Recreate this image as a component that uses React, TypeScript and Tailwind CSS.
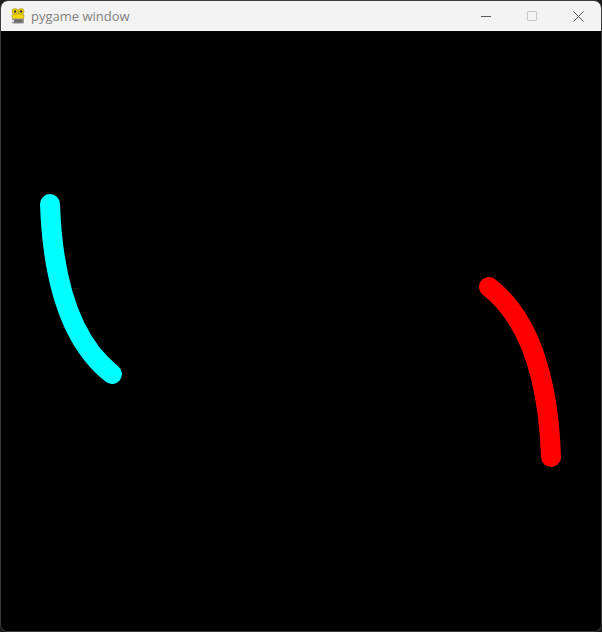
import React from "react";

function PygameIcon() {
  return (
    <svg width="18" height="18" viewBox="0 0 18 18" className="block">
      <ellipse cx="6" cy="4.5" rx="3" ry="3" fill="#f5d800" stroke="#9a8a20" strokeWidth="0.6" />
      <ellipse cx="12" cy="4.5" rx="3" ry="3" fill="#f5d800" stroke="#9a8a20" strokeWidth="0.6" />
      <circle cx="6" cy="4.5" r="1.2" fill="#333" />
      <circle cx="12" cy="4.5" r="1.2" fill="#333" />
      <path d="M3 8 Q9 5 15 8 L14.5 12 Q9 14 3.5 12 Z" fill="#f5d800" stroke="#9a8a20" strokeWidth="0.6" />
      <rect x="3" y="11.5" width="12" height="5" rx="1.5" fill="#8d8d8d" />
      <rect x="5" y="12.5" width="8" height="3" rx="1" fill="#6a6a6a" />
      <circle cx="4" cy="14" r="1.2" fill="#e0e0e0" />
    </svg>
  );
}

export default function App() {
  return (
    <div className="w-[602px] h-[632px] bg-[#1c1c1c]">
      <div className="w-full h-full flex flex-col rounded-[8px] border border-[#3c3c3c] overflow-hidden bg-black">
        <div className="h-[30px] shrink-0 bg-[#f3f3f3] flex items-center">
          <div className="ml-[8px] w-[18px] h-[18px]">
            <PygameIcon />
          </div>
          <span
            className="ml-[4px] text-[13px] text-[#808080] leading-none"
            style={{ fontFamily: '"Segoe UI", "Open Sans", "Noto Sans", sans-serif' }}
          >
            pygame window
          </span>
          <div className="ml-auto flex items-center h-full">
            <div className="w-[46px] h-full flex items-center justify-center">
              <div className="w-[10px] h-px bg-[#5a5a5a]" />
            </div>
            <div className="w-[46px] h-full flex items-center justify-center">
              <div className="w-[10px] h-[10px] border border-[#c8c8c8] rounded-[1px]" />
            </div>
            <div className="w-[46px] h-full flex items-center justify-center">
              <svg width="11" height="11" viewBox="0 0 11 11">
                <path d="M0.5 0.5 L10.5 10.5 M10.5 0.5 L0.5 10.5" stroke="#5a5a5a" strokeWidth="1" />
              </svg>
            </div>
          </div>
        </div>
        <div className="flex-1 bg-black">
          <svg width="600" height="600" viewBox="1 31 600 600" className="block">
            <path
              d="M50 204 C53 290 75 345 112 374"
              fill="none"
              stroke="#00ffff"
              strokeWidth="20"
              strokeLinecap="round"
            />
            <path
              d="M551 457 C548 371 526 316 489 287"
              fill="none"
              stroke="#ff0000"
              strokeWidth="20"
              strokeLinecap="round"
            />
          </svg>
        </div>
      </div>
    </div>
  );
}
